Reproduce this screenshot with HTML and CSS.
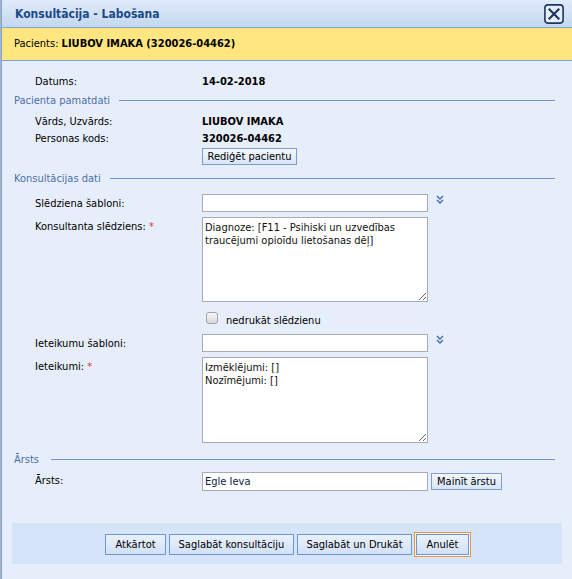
FILE: index.html
```html
<!DOCTYPE html>
<html lang="lv">
<head>
<meta charset="utf-8">
<title>Konsultācija - Labošana</title>
<link rel="stylesheet" href="styles.css">
</head>
<body>
<div class="window">
  <div class="titlebar">
    <span class="title">Konsultācija - Labošana</span>
    <span class="close">
      <svg width="20" height="20" viewBox="0 0 20 20">
        <rect x="0.9" y="0.9" width="18.2" height="18.2" rx="3" ry="3" fill="#e6eefa" stroke="#1f3763" stroke-width="1.6"/>
        <path d="M5.5 5.5 L14.5 14.5 M14.5 5.5 L5.5 14.5" stroke="#1f3763" stroke-width="2.2" stroke-linecap="square"/>
      </svg>
    </span>
  </div>
  <div class="patient">Pacients: <b>LIUBOV IMAKA (320026-04462)</b></div>
  <div class="content">
    <div class="field r-datums"><span class="label">Datums:</span><b>14-02-2018</b></div>

    <div class="legend l-pac"><span>Pacienta pamatdati</span></div>
    <div class="field r-tall r-vards"><span class="label">Vārds, Uzvārds:</span><b>LIUBOV IMAKA</b></div>
    <div class="field r-tall"><span class="label">Personas kods:</span><b>320026-04462</b></div>
    <div class="field r-btn"><span></span><span><button class="btn btn-edit">Rediģēt pacientu</button></span></div>

    <div class="legend l-kons"><span>Konsultācijas dati</span></div>
    <div class="field r-center r-sabl1">
      <span class="label">Slēdziena šabloni:</span>
      <input class="inp" type="text">
      <span class="chev"><svg width="8" height="9" viewBox="0 0 8 9"><path d="M1 1 L4 4 L7 1 M1 5 L4 8 L7 5" fill="none" stroke="#3f6cb0" stroke-width="1.4"/></svg></span>
    </div>
    <div class="field r-area">
      <span class="label lab-top">Konsultanta slēdziens: <span class="req">*</span></span>
      <textarea class="area a1">Diagnoze: [F11 - Psihiski un uzvedības traucējumi opioīdu lietošanas dēļ]</textarea>
    </div>
    <div class="field r-check">
      <span></span>
      <span class="checkwrap"><span class="checkbox"></span><span class="checktext">nedrukāt slēdzienu</span></span>
    </div>
    <div class="field r-center r-sabl2">
      <span class="label">Ieteikumu šabloni:</span>
      <input class="inp" type="text">
      <span class="chev"><svg width="8" height="9" viewBox="0 0 8 9"><path d="M1 1 L4 4 L7 1 M1 5 L4 8 L7 5" fill="none" stroke="#3f6cb0" stroke-width="1.4"/></svg></span>
    </div>
    <div class="field r-area">
      <span class="label lab-top">Ieteikumi: <span class="req">*</span></span>
      <textarea class="area a2">Izmēklējumi: []
Nozīmējumi: []</textarea>
    </div>

    <div class="legend l-arsts"><span>Ārsts</span></div>
    <div class="field r-arsts">
      <span class="label lab-arsts">Ārsts:</span>
      <input class="inp inp-arsts" type="text" value="Egle Ieva">
      <span class="btncell"><button class="btn btn-mainit">Mainīt ārstu</button></span>
    </div>

    <div class="buttonbar">
      <button class="btn btn-big w-atk">Atkārtot</button>
      <button class="btn btn-big w-sk">Saglabāt konsultāciju</button>
      <button class="btn btn-big w-sd">Saglabāt un Drukāt</button>
      <button class="btn btn-big w-an focused">Anulēt</button>
    </div>
  </div>
</div>
</body>
</html>
```
FILE: styles.css
```css
* { box-sizing: border-box; }
html { background: #a9b3c1; }
body {
  margin: 0;
  font-family: "DejaVu Sans Condensed", "DejaVu Sans", sans-serif;
  font-stretch: semi-condensed;
  font-size: 11px;
  line-height: 13px;
  color: #000;
}
.window {
  margin-left: 1px;
  border-left: 1px solid #7ea3d6;
  background: #e7eefb;
  height: 579px;
  overflow: hidden;
}
.titlebar {
  height: 28px;
  border-bottom: 1px solid #86a9db;
  background: linear-gradient(#e0ebfa, #c5d7ef);
  display: flex;
  align-items: center;
  justify-content: space-between;
  padding: 0 8px 0 13px;
}
.title {
  font-size: 12px;
  font-weight: bold;
  color: #1b4a8a;
  margin-top: 2px;
}
.close { display: block; width: 20px; height: 20px; margin-top: 1px; }
.close svg { display: block; }
.patient {
  height: 33px;
  line-height: 32px;
  background: #ffe681;
  border-bottom: 1px solid #7fa3d6;
  padding-left: 12px;
}
.content { padding: 0 17px 0 12px; }

.legend {
  display: flex;
  align-items: center;
  gap: 9px;
  color: #4a6ea6;
  height: 13px;
}
.legend::after {
  content: "";
  flex: 1;
  height: 1px;
  background: #6f98d2;
}
.l-pac { margin-top: 6px; }
.l-kons { margin-top: 7px; }
.l-arsts { margin-top: 10px; gap: 12px; }

.field {
  display: grid;
  grid-template-columns: 167px 226px auto;
  padding-left: 21px;
}
.r-datums { margin-top: 14px; }
.r-tall { line-height: 17px; }
.r-vards { margin-top: 6px; }
.r-btn { margin-top: 1px; }
.r-center { align-items: center; }
.r-sabl1 { margin-top: 9px; }
.r-sabl2 { margin-top: 7px; }
.r-area { margin-top: 5px; align-items: start; }
.r-check { margin-top: 10px; }
.r-arsts { margin-top: 6px; align-items: start; }

.lab-top { padding-top: 3px; }
.lab-arsts { padding-top: 2px; }
.req { color: #e8332c; }

.inp {
  display: block;
  width: 226px;
  height: 18px;
  border: 1px solid #a9abb0;
  background: #fff;
  padding: 0 2px;
  font: inherit;
  color: #111;
  margin: 0;
  outline: none;
}
.inp-arsts { height: 19px; color: #131a4a; }
.chev { display: block; margin-left: 8px; height: 9px; align-self: start; margin-top: 1px; }
.chev svg { display: block; }

.area {
  display: block;
  width: 226px;
  height: 85px;
  border: 1px solid #a9abb0;
  background: #fff;
  padding: 3px 2px;
  font: inherit;
  line-height: 13px;
  color: #111;
  margin: 0;
  outline: none;
}
.a2 { height: 86px; }

.checkwrap { display: flex; align-items: flex-start; padding-left: 4px; }
.checkbox {
  display: block;
  width: 12px;
  height: 12px;
  border: 1px solid #a3a3a3;
  border-radius: 3px;
  background: linear-gradient(#f6f6f6, #d9d9d9);
}
.checktext { margin-left: 8px; margin-top: 2px; }

.btn {
  display: block;
  height: 17px;
  border: 1px solid #7b9fd4;
  background: linear-gradient(#f2f6fd, #d8e5f8);
  font: inherit;
  line-height: 15px;
  color: #000;
  padding: 0;
  margin: 0;
  text-align: center;
  border-radius: 0;
}
.btn-edit { width: 95px; }
.btncell { padding-left: 3px; padding-top: 1px; }
.btn-mainit { width: 71px; }

.buttonbar {
  margin: 32px -7px 0 -2px;
  height: 41px;
  background: #d6e4fa;
  display: flex;
  justify-content: center;
  align-items: flex-start;
  gap: 3px;
  padding-top: 11px;
}
.btn-big {
  height: 21px;
  line-height: 19px;
  background: linear-gradient(#e9f1fc, #d2e1f7);
  border-color: #6f97cf;
}
.w-atk { width: 61px; }
.w-sk { width: 125px; }
.w-sd { width: 115px; }
.w-an { width: 53px; margin-left: 1px; }
.focused { box-shadow: 0 0 0 1px #f3f7fe, 0 0 0 2px #f39234; }
```
